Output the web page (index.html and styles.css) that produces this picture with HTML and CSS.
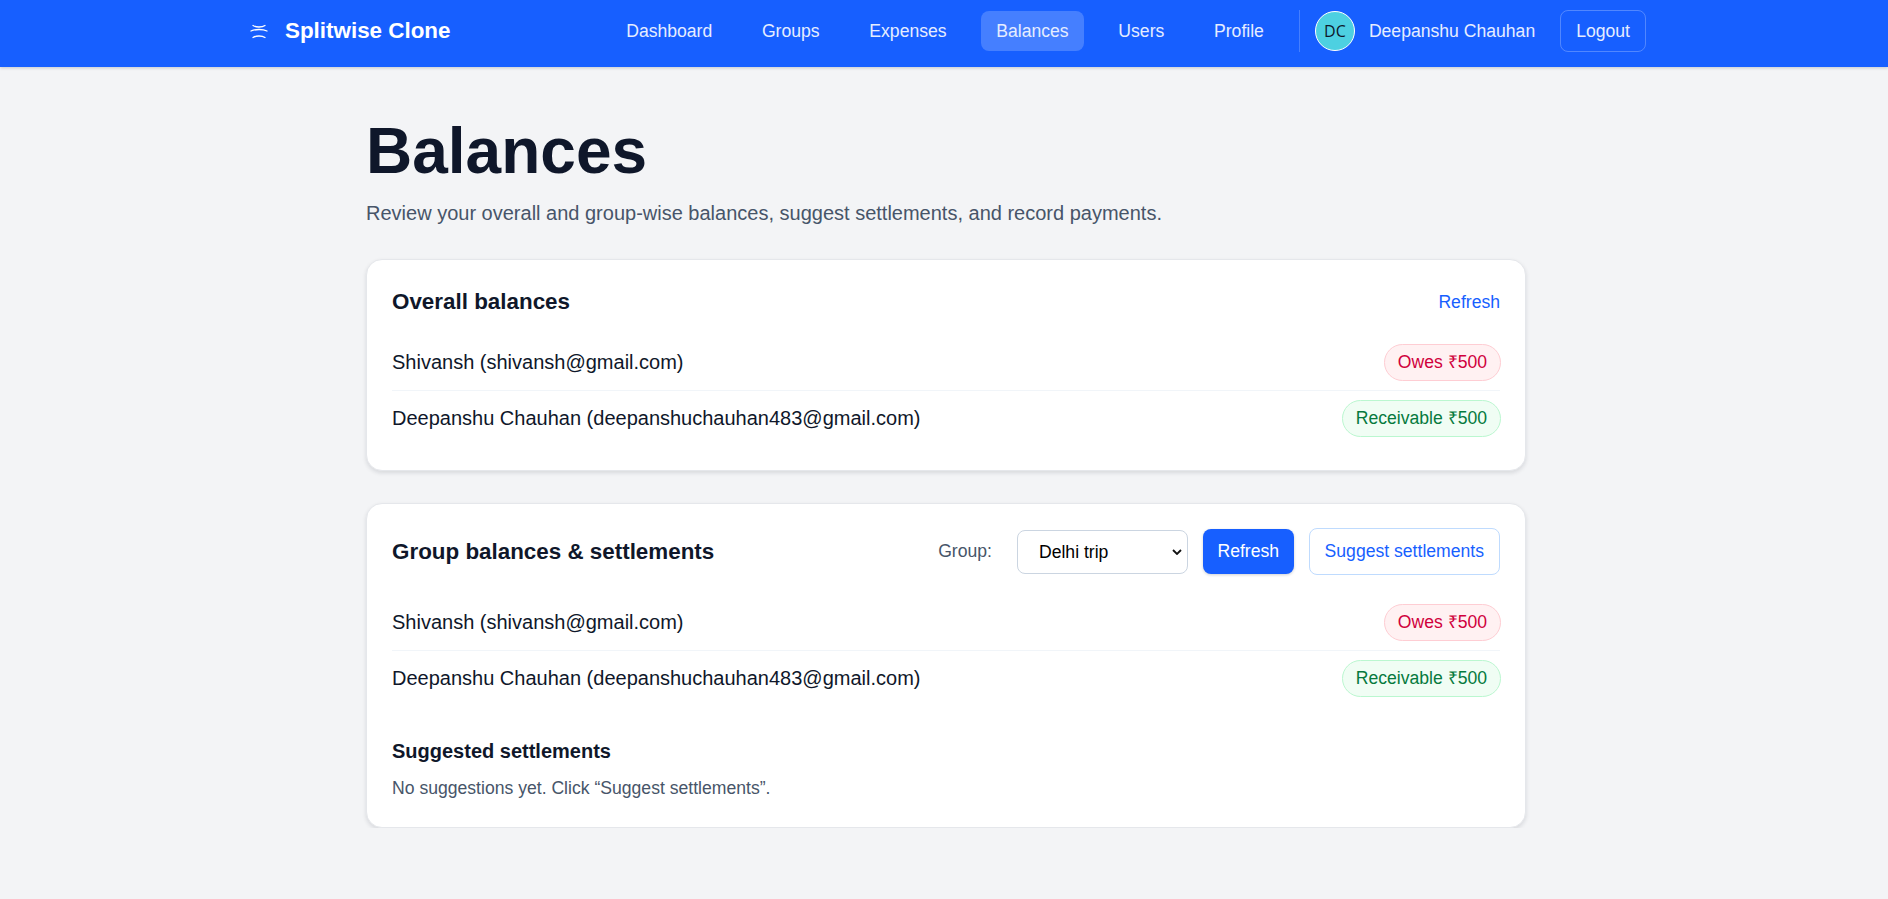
FILE: index.html
```html
<!DOCTYPE html>
<html lang="en">
<head>
    <meta charset="UTF-8">
    <title>Balances</title>
    <link rel="stylesheet" href="styles.css">
</head>
<body>

    <!-- Top navigation -->
    <header class="topbar">
        <div class="brand">
            <svg class="brand-icon" width="18" height="15" viewBox="0 0 18 15" fill="none" stroke="#fff" stroke-width="1.3" stroke-linecap="round">
                <path d="M3 1.5C6 3.5 12 3.5 15 1.5"/>
                <path d="M1 7C5 5 13 5 17 7"/>
                <path d="M3 13.5C6 11.5 12 11.5 15 13.5"/>
            </svg>
            <span>Splitwise Clone</span>
        </div>
        <nav class="nav">
            <a class="nav-link" href="#">Dashboard</a>
            <a class="nav-link" href="#">Groups</a>
            <a class="nav-link" href="#">Expenses</a>
            <a class="nav-link active" href="#">Balances</a>
            <a class="nav-link" href="#">Users</a>
            <a class="nav-link" href="#">Profile</a>
        </nav>
        <div class="user">
            <span class="avatar">DC</span>
            <span class="user-name">Deepanshu Chauhan</span>
            <button class="logout">Logout</button>
        </div>
    </header>

    <main class="page">
        <h1>Balances</h1>
        <p class="lead">Review your overall and group-wise balances, suggest settlements, and record payments.</p>

        <!-- Overall balances -->
        <section class="card">
            <div class="card-head">
                <h2>Overall balances</h2>
                <a class="link" href="#">Refresh</a>
            </div>
            <div class="row">
                <span>Shivansh (shivansh@gmail.com)</span>
                <span class="pill owes">Owes ₹500</span>
            </div>
            <div class="row">
                <span>Deepanshu Chauhan (deepanshuchauhan483@gmail.com)</span>
                <span class="pill gets">Receivable ₹500</span>
            </div>
        </section>

        <!-- Group balances -->
        <section class="card">
            <div class="card-head with-controls">
                <h2>Group balances &amp; settlements</h2>
                <div class="controls">
                    <label for="group">Group:</label>
                    <select id="group">
                        <option>Delhi trip</option>
                    </select>
                    <button class="btn primary">Refresh</button>
                    <button class="btn outline">Suggest settlements</button>
                </div>
            </div>
            <div class="row">
                <span>Shivansh (shivansh@gmail.com)</span>
                <span class="pill owes">Owes ₹500</span>
            </div>
            <div class="row">
                <span>Deepanshu Chauhan (deepanshuchauhan483@gmail.com)</span>
                <span class="pill gets">Receivable ₹500</span>
            </div>
            <h3>Suggested settlements</h3>
            <p class="muted">No suggestions yet. Click “Suggest settlements”.</p>
        </section>
    </main>

</body>
</html>
```

FILE: styles.css
```css
* {
    box-sizing: border-box;
}

body {
    margin: 0;
    background: #f3f4f6;
    color: #0f172a;
    font-family: 'Liberation Sans', Arial, sans-serif;
    font-size: 16px;
}

.topbar {
    height: 67px;
    background: #175fff;
    box-shadow: 0 1px 3px rgba(15, 23, 42, 0.2);
    display: flex;
    align-items: center;
    padding: 0 242px 5px 250px;
    color: #fff;
    font-size: 17.6px;
}

.brand {
    display: flex;
    align-items: center;
    gap: 17px;
    font-size: 22.4px;
    font-weight: 700;
}

.nav {
    display: flex;
    align-items: center;
    gap: 19.7px;
    margin-left: auto;
}

.nav-link {
    color: #e6edff;
    text-decoration: none;
    padding: 11px 15px;
    border-radius: 8px;
    line-height: 18px;
}

.nav-link.active {
    background: #457fff;
}

.user {
    display: flex;
    align-items: center;
    margin-left: 20px;
    padding-left: 15px;
    height: 42px;
    border-left: 1px solid rgba(255, 255, 255, 0.2);
}

.avatar {
    width: 40px;
    height: 40px;
    border-radius: 50%;
    border: 1px solid #fff;
    background: #4dd0e1;
    color: #0f172a;
    font-family: 'Open Sans', sans-serif;
    font-size: 16px;
    display: flex;
    align-items: center;
    justify-content: center;
}

.user-name {
    margin-left: 14px;
    color: #e6edff;
}

.logout {
    margin-left: 25px;
    height: 42px;
    padding: 0 15px;
    background: transparent;
    border: 1px solid rgba(255, 255, 255, 0.25);
    border-radius: 8px;
    color: #e6edff;
    font: inherit;
}

.page {
    width: 1160px;
    margin-left: 366px;
    padding-top: 48px;
}

h1 {
    margin: 0;
    font-size: 64px;
    line-height: 72px;
    font-weight: 700;
}

.lead {
    margin: 12px 0 0;
    font-size: 20px;
    line-height: 28px;
    color: #475569;
}

.card {
    background: #fff;
    border: 1px solid #e5e7eb;
    border-radius: 16px;
    box-shadow: 0 2px 4px rgba(15, 23, 42, 0.12);
    padding: 24px 25px;
    margin-top: 32px;
}

.card-head {
    display: flex;
    align-items: center;
    justify-content: space-between;
    min-height: 36px;
    margin-bottom: 15px;
}

.card-head.with-controls {
    margin-bottom: 20px;
}

h2 {
    margin: 0;
    font-size: 22.4px;
    font-weight: 700;
}

h3 {
    margin: 34px 0 0;
    font-size: 20px;
    font-weight: 700;
}

.link {
    color: #175fff;
    text-decoration: none;
    font-size: 17.6px;
}

.row {
    display: flex;
    align-items: center;
    justify-content: space-between;
    font-size: 20px;
    padding: 9px 0;
}

.row + .row {
    border-top: 1px solid #f1f5f9;
}

.pill {
    font-size: 17.6px;
    line-height: 21px;
    padding: 7px 13px;
    margin-right: -1px;
    border-radius: 999px;
    border: 1px solid;
}

.owes {
    color: #d0003c;
    background: #fff1f2;
    border-color: #fecdd3;
}

.gets {
    color: #067a3e;
    background: #f0fdf4;
    border-color: #bbf7d0;
}

.controls {
    display: flex;
    align-items: center;
}

label {
    color: #475569;
    font-size: 17.6px;
    margin-right: 25px;
}

select {
    appearance: none;
    width: 171px;
    height: 44px;
    padding: 0 24px 0 21px;
    font: inherit;
    font-size: 17.6px;
    background: #fff url("data:image/svg+xml,%3Csvg xmlns='http://www.w3.org/2000/svg' width='10' height='6' viewBox='0 0 10 6'%3E%3Cpath d='M1 1l4 4 4-4' fill='none' stroke='%23111' stroke-width='1.8'/%3E%3C/svg%3E") no-repeat right 5px center;
    color: #000;
    border: 1px solid #cbd5e1;
    border-radius: 8px;
}

.btn {
    font: inherit;
    font-size: 17.6px;
    border-radius: 8px;
    margin-left: 15px;
}

.primary {
    height: 45px;
    padding: 0 14.5px;
    background: #175fff;
    color: #fff;
    border: 0;
    box-shadow: 0 1px 3px rgba(15, 23, 42, 0.2);
}

.outline {
    height: 47px;
    padding: 0 15px;
    background: #fff;
    color: #175fff;
    border: 1px solid #bfdbfe;
}

.muted {
    margin: 15px 0 4px;
    font-size: 17.6px;
    color: #475569;
}
```
